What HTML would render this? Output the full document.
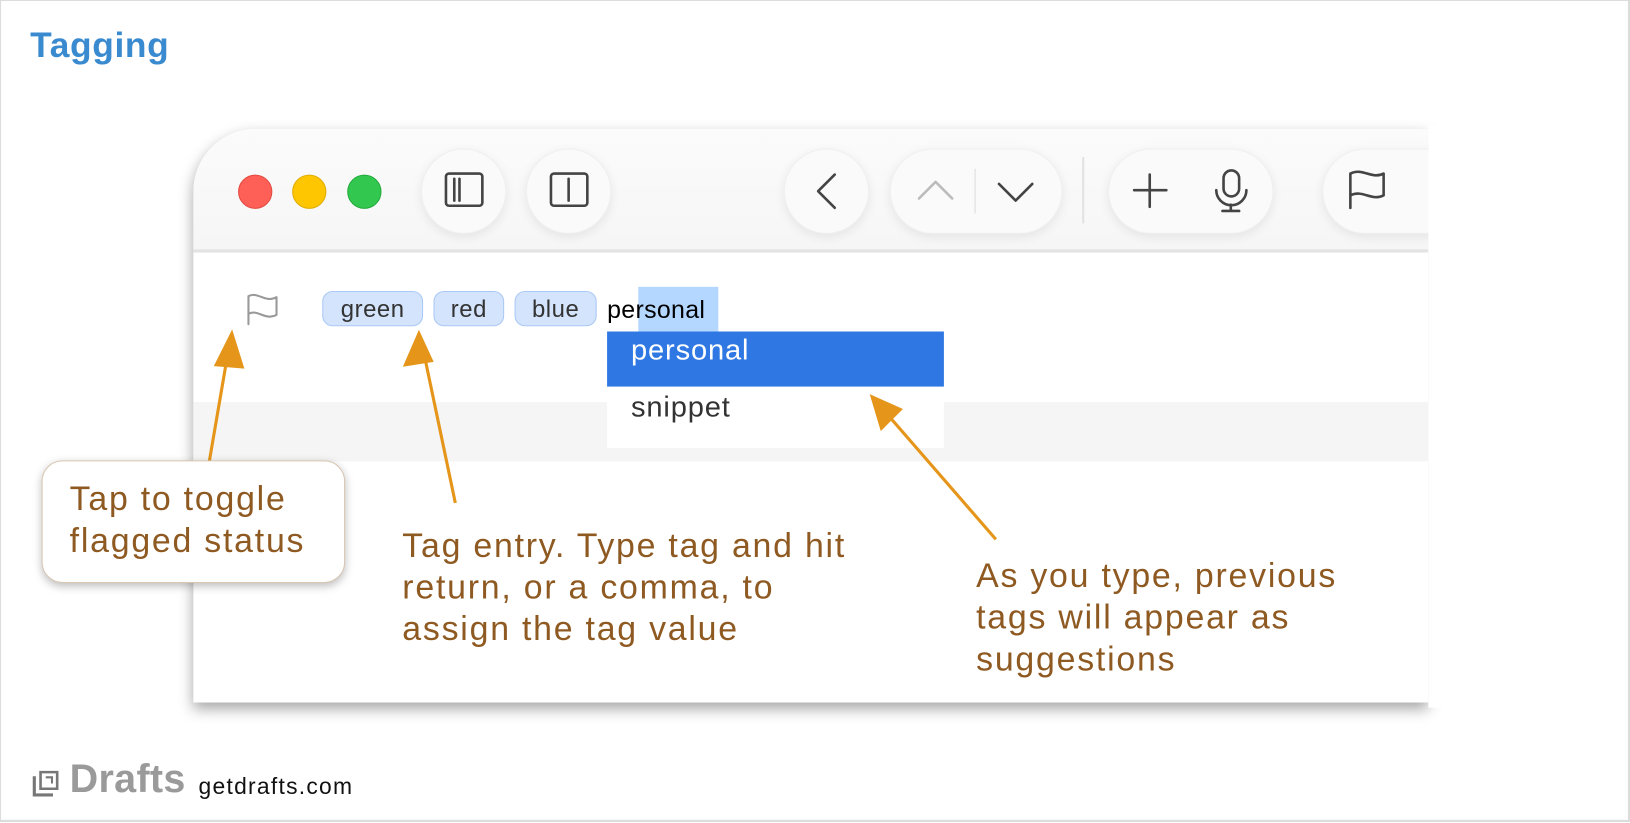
<!DOCTYPE html>
<html><head><meta charset="utf-8"><style>
*{margin:0;padding:0;box-sizing:border-box}
html,body{width:1630px;height:822px;overflow:hidden;background:#fff;font-family:"Liberation Sans",sans-serif}
#s{position:absolute;left:0;top:0;width:1568px;height:791px;transform:scale(1.03954,1.0392);transform-origin:0 0;border:1px solid #dcdcdc;border-right:2px solid #dcdcdc;border-bottom:2px solid #dcdcdc}
.a{position:absolute}
.brown{color:#8e5a22;font-size:32.6px;line-height:40px;letter-spacing:1.7px;white-space:nowrap}
.btn{position:absolute;border-radius:41px;background:#fafafa;box-shadow:0 3px 10px rgba(0,0,0,.08);border:1px solid #f0f0f0}
.tag{position:absolute;top:279px;height:34px;background:#d4e4fd;border:1px solid #a9c8f5;border-radius:10px;font-size:23px;color:#333;text-align:center;line-height:32px;letter-spacing:0.5px}
</style></head><body><div id="s">
<div class="a" style="left:28px;top:24px;font-size:34px;font-weight:bold;color:#3a8ad0;letter-spacing:0.6px">Tagging</div>

<div class="a" style="left:185px;top:123px;width:1188px;height:552px;background:#fff;border-top-left-radius:60px;box-shadow:0 6px 14px rgba(0,0,0,.35);overflow:hidden">
 <div class="a" style="left:0;top:0;width:1188px;height:117px;background:linear-gradient(#fbfbfb,#f6f6f6)"></div>
 <div class="a" style="left:0;top:116px;width:1188px;height:3px;background:#e3e3e3"></div>
 <div class="a" style="left:0;top:263px;width:1188px;height:57px;background:#f5f5f5"></div>
</div>
<div class="a" style="left:228px;top:167px;width:33px;height:33px;border-radius:50%;background:#fe5f57;border:1px solid #e24b42"></div>
<div class="a" style="left:280px;top:167px;width:33px;height:33px;border-radius:50%;background:#fdc600;border:1px solid #e0ad00"></div>
<div class="a" style="left:333px;top:167px;width:33px;height:33px;border-radius:50%;background:#32c84f;border:1px solid #22a93b"></div>
<div class="btn" style="left:404px;top:142px;width:82px;height:82px"></div>
<div class="btn" style="left:505px;top:142px;width:82px;height:82px"></div>
<div class="btn" style="left:753px;top:142px;width:82px;height:82px"></div>
<div class="btn" style="left:855px;top:142px;width:166px;height:82px"></div>
<div class="a" style="left:1040px;top:150px;width:2px;height:64px;background:#e2e2e2"></div>
<div class="btn" style="left:1065px;top:142px;width:159px;height:82px"></div>
<div class="btn" style="left:1271px;top:142px;width:120px;height:82px;border-radius:41px 0 0 41px"></div>
<div class="a" style="left:1373px;top:120px;width:30px;height:560px;background:#fff"></div>
<svg class="a" style="left:0;top:0" width="1568" height="791">
 <g fill="none" stroke="#444" stroke-width="2.5" stroke-linecap="round" stroke-linejoin="round">
  <rect x="428" y="166" width="35" height="31" rx="3"/><line x1="436" y1="171" x2="436" y2="192"/><line x1="441" y1="171" x2="441" y2="192"/>
  <rect x="529" y="166" width="35" height="31" rx="3"/><line x1="546" y1="171" x2="546" y2="192"/>
  <path d="M802 167 L786 183 L802 199"/>
  <path d="M883 190 L899 174 L915 190" stroke="#bbb"/>
  <line x1="937" y1="162" x2="937" y2="204" stroke="#e5e5e5" stroke-width="1.5"/>
  <path d="M960 176 L976 192 L992 176"/>
  <path d="M1105 167 V198 M1090 182 H1121"/>
  <rect x="1176" y="163" width="15" height="25" rx="7.5"/><path d="M1169 182 a14 14 0 0 0 29 0 M1183 196 V202 M1175 202 H1191"/>
  <path d="M1298 199 V166 C1310 160,1318 172,1330 166 V187 C1318 193,1310 181,1298 187"/>
  <path d="M238 311 V284 C247 279,254 291,265 285 V302 C254 308,247 296,238 301" stroke="#999" stroke-width="2"/>
 </g>
</svg>
<div class="tag" style="left:309px;width:97px">green</div>
<div class="tag" style="left:416px;width:68px">red</div>
<div class="tag" style="left:494px;width:79px">blue</div>
<div class="a" style="left:613px;top:275px;width:77px;height:43px;background:#b3d7ff"></div>
<div class="a" style="left:583px;top:284px;font-size:24px;color:#000;letter-spacing:0.3px">personal</div>
<div class="a" style="left:583px;top:318px;width:324px;height:112px;background:#fff"></div>
<div class="a" style="left:583px;top:318px;width:324px;height:53px;background:#2f78e4"></div>
<div class="a" style="left:606px;top:320px;font-size:28px;color:#fff;letter-spacing:0.8px">personal</div>
<div class="a" style="left:606px;top:375px;font-size:28px;color:#333;letter-spacing:0.8px">snippet</div>

<svg class="a" style="left:0;top:0" width="1568" height="791">
 <g stroke="#e5961a" stroke-width="3" fill="#e5961a">
  <line x1="200" y1="445" x2="218" y2="340"/><polygon points="222,320 207,350 232,352"/>
  <line x1="437" y1="483" x2="407" y2="340"/><polygon points="402,320 389,350 414,346"/>
  <line x1="957" y1="518" x2="852" y2="397"/><polygon points="838,381 847,411 865,393"/>
 </g>
</svg>
<div class="a" style="left:39px;top:442px;width:292px;height:118px;border-radius:20px;background:#fff;border:1.5px solid #d8c6b2;box-shadow:0 3px 8px rgba(0,0,0,.25)"></div>
<div class="a brown" style="left:66px;top:459px">Tap to toggle<br>flagged status</div>
<div class="a brown" style="left:386px;top:504px">Tag entry. Type tag and hit<br>return, or a comma, to<br>assign the tag value</div>
<div class="a brown" style="left:938px;top:533px">As you type, previous<br>tags will appear as<br>suggestions</div>

<svg class="a" style="left:30px;top:740px" width="26" height="26"><g fill="none" stroke="#777" stroke-width="3"><path d="M2 6 V24 H20"/><path d="M8 2 H24 V18 H8 Z" stroke-width="2.5"/><path d="M13 7 H19 V13" stroke-width="2"/></g></svg>
<div class="a" style="left:66px;top:728px;font-size:38px;font-weight:bold;color:#9a9a9a;letter-spacing:0.3px">Drafts</div>
<div class="a" style="left:190px;top:743px;font-size:22px;color:#111;letter-spacing:1.2px">getdrafts.com</div>
</div></body></html>
